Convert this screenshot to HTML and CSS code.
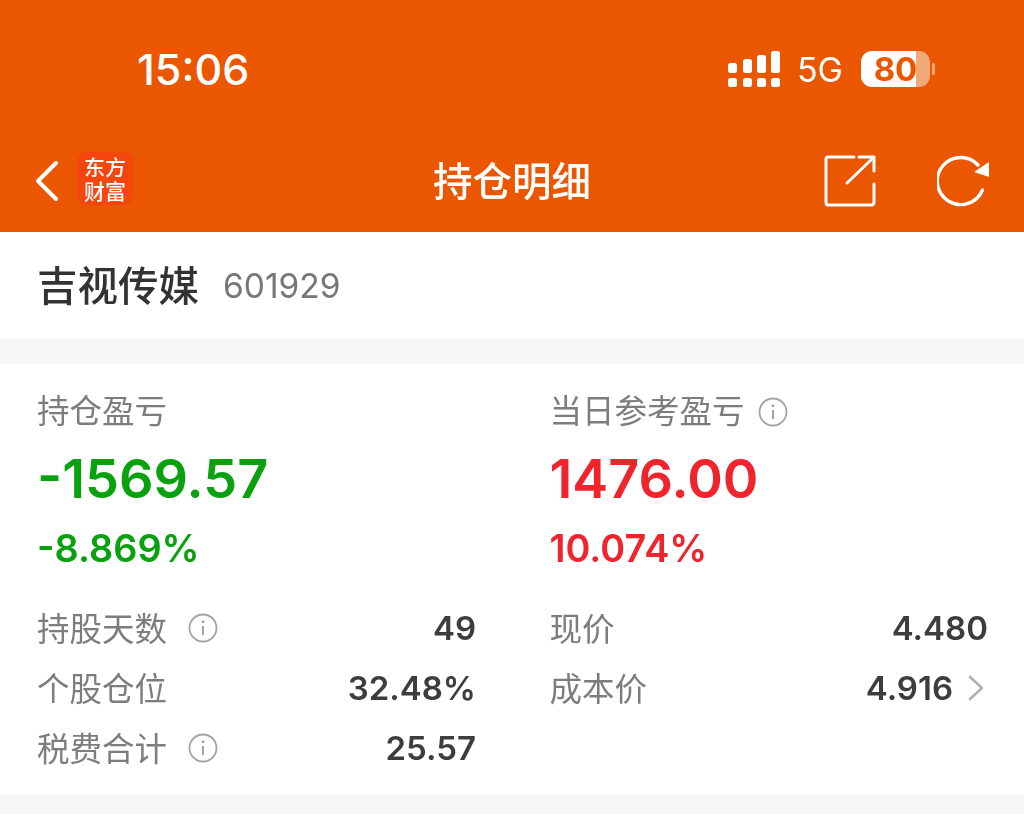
FILE: index.html
```html
<!DOCTYPE html>
<html lang="zh-CN">
<head>
  <meta charset="UTF-8" />
  <meta name="viewport" content="width=device-width, initial-scale=1" />
  <title>持仓明细</title>
  <link rel="stylesheet" href="styles.css">
</head>
<body>

  <header class="top-bar">
    <div class="status-bar">
      <span class="clock">15:06</span>
      <div class="status-icons">
        <svg class="signal" width="52" height="36" viewBox="0 0 52 36" fill="#fff">
          <rect x="0" y="12" width="9" height="10" rx="2.5"/>
          <rect x="15" y="8" width="9" height="14" rx="2.5"/>
          <rect x="29" y="4" width="9" height="18" rx="2.5"/>
          <rect x="43" y="0" width="9" height="22" rx="2.5"/>
          <rect x="0" y="27" width="9" height="9" rx="2.5"/>
          <rect x="15" y="27" width="9" height="9" rx="2.5"/>
          <rect x="29" y="27" width="9" height="9" rx="2.5"/>
          <rect x="43" y="27" width="9" height="9" rx="2.5"/>
        </svg>
        <span class="net">5G</span>
        <div class="battery">
          <div class="battery-body"><span>80</span></div>
          <div class="battery-tip"></div>
        </div>
      </div>
    </div>
    <nav class="nav-bar">
      <div class="nav-left">
        <svg width="26" height="42" viewBox="0 0 26 42" fill="none" stroke="#fff" stroke-width="4" stroke-linecap="round" stroke-linejoin="round">
          <path d="M21 3 L3 21 L21 39"/>
        </svg>
        <div class="app-logo">东方财富</div>
      </div>
      <h1>持仓明细</h1>
      <div class="nav-right">
        <svg width="52" height="52" viewBox="0 0 52 52" fill="none" stroke="#fff" stroke-width="3" stroke-linecap="round" stroke-linejoin="round">
          <path d="M30 2 H4 Q2 2 2 4 V47 Q2 50 4 50 H47 Q50 50 50 47 V29"/>
          <path d="M23 28 L49 3"/>
          <path d="M35 2 H50 V16"/>
        </svg>
        <svg width="52" height="52" viewBox="0 0 52 52" fill="none">
          <path d="M45.5 35 A23.5 23.5 0 1 1 41 10" stroke="#fff" stroke-width="3.4" stroke-linecap="round"/>
          <path d="M52 7 V22 L37 17 Z" fill="#fff"/>
        </svg>
      </div>
    </nav>
  </header>

  <section class="stock-row">
    <span class="stock-name">吉视传媒</span>
    <span class="stock-code">601929</span>
  </section>

  <main class="panel">
    <div class="summary">
      <div class="summary-col">
        <div class="summary-label">持仓盈亏</div>
        <div class="summary-value down">-1569.57</div>
        <div class="summary-pct down">-8.869%</div>
      </div>
      <div class="summary-col">
        <div class="summary-label">当日参考盈亏
          <svg class="info info-top" viewBox="0 0 30 30" fill="none">
            <circle cx="15" cy="15" r="13.5" stroke="#a3a3a3" stroke-width="1.8"/>
            <circle cx="15" cy="8.8" r="1.4" fill="#9a9a9a"/>
            <path d="M15 13 V22" stroke="#9a9a9a" stroke-width="1.8"/>
          </svg>
        </div>
        <div class="summary-value up">1476.00</div>
        <div class="summary-pct up">10.074%</div>
      </div>
    </div>

    <div class="details">
      <div class="detail-row">
        <span class="detail-label">持股天数
          <svg class="info" viewBox="0 0 30 30" fill="none">
            <circle cx="15" cy="15" r="13.5" stroke="#a3a3a3" stroke-width="1.8"/>
            <circle cx="15" cy="8.8" r="1.4" fill="#9a9a9a"/>
            <path d="M15 13 V22" stroke="#9a9a9a" stroke-width="1.8"/>
          </svg>
        </span>
        <span class="detail-value">49</span>
      </div>
      <div class="detail-row">
        <span class="detail-label">现价</span>
        <span class="detail-value">4.480</span>
      </div>
      <div class="detail-row">
        <span class="detail-label">个股仓位</span>
        <span class="detail-value">32.48%</span>
      </div>
      <div class="detail-row">
        <span class="detail-label">成本价</span>
        <span class="detail-value">4.916
          <svg class="chevron" width="16" height="26" viewBox="0 0 16 26" fill="none" stroke="#b0b0b0" stroke-width="2.6" stroke-linecap="round" stroke-linejoin="round">
            <path d="M2 2 L14 13 L2 24"/>
          </svg>
        </span>
      </div>
      <div class="detail-row">
        <span class="detail-label">税费合计
          <svg class="info" viewBox="0 0 30 30" fill="none">
            <circle cx="15" cy="15" r="13.5" stroke="#a3a3a3" stroke-width="1.8"/>
            <circle cx="15" cy="8.8" r="1.4" fill="#9a9a9a"/>
            <path d="M15 13 V22" stroke="#9a9a9a" stroke-width="1.8"/>
          </svg>
        </span>
        <span class="detail-value">25.57</span>
      </div>
    </div>
  </main>

  <div class="gap-strip"></div>

</body>
</html>
```

FILE: styles.css
```css
html, body {
  height: 817px;
  overflow: hidden;
}

body {
  margin: 0;
  font-family: Inter, "Noto Sans CJK SC", sans-serif;
  background-color: #ffffff;
  color: #333;
  filter: blur(0.5px);
}

.top-bar {
  background-color: #eb5600;
  height: 232px;
  color: #fff;
}

.status-bar {
  height: 130px;
  padding: 8px 89px 0 137px;
  display: flex;
  justify-content: space-between;
  align-items: center;
  box-sizing: border-box;
}

.clock {
  font-size: 43px;
  font-weight: 500;
}

.status-icons {
  display: flex;
  align-items: center;
}

.net {
  font-size: 34px;
  margin: 0 18px 0 17px;
}

.battery {
  display: flex;
  align-items: center;
  gap: 2px;
}

.battery-body {
  width: 69px;
  height: 36px;
  border-radius: 11px;
  background: linear-gradient(to right, #fff 80%, #f3a878 80%);
  color: #eb5600;
  font-size: 33px;
  font-weight: 700;
  line-height: 36px;
  text-align: center;
}

.battery-tip {
  width: 3px;
  height: 12px;
  background-color: #f3a878;
  border-radius: 0 2px 2px 0;
}

.nav-bar {
  height: 102px;
  padding: 0 35px 0 35px;
  display: flex;
  justify-content: space-between;
  align-items: center;
  position: relative;
}

.nav-left {
  display: flex;
  align-items: center;
  gap: 16px;
}

.app-logo {
  width: 56px;
  height: 53px;
  margin-top: -5px;
  padding: 2px 6px;
  box-sizing: border-box;
  background-color: #f5460e;
  border-radius: 9px;
  text-align: center;
  font-family: "Noto Sans CJK SC", sans-serif;
  font-size: 21px;
  font-weight: 500;
  line-height: 24px;
}

.nav-bar h1 {
  position: absolute;
  left: 0;
  right: 0;
  margin: 0;
  padding-bottom: 6px;
  text-align: center;
  font-size: 39.5px;
  font-weight: 500;
  font-family: "Noto Sans CJK SC", sans-serif;
  pointer-events: none;
}

.nav-right {
  display: flex;
  align-items: center;
  gap: 61px;
}

.stock-row {
  height: 107px;
  padding: 0 37px 0 37px;
  display: flex;
  align-items: center;
  gap: 24px;
  box-sizing: border-box;
}

.stock-name {
  font-size: 40.5px;
  font-weight: 500;
  color: #333;
  font-family: "Noto Sans CJK SC", sans-serif;
  padding-bottom: 4px;
}

.stock-code {
  font-size: 33.5px;
  color: #777;
}

.panel {
  border-top: 25px solid #f5f6f8;
  padding: 21px 36px 0 37px;
  height: 456px;
  box-sizing: border-box;
}

.summary {
  display: grid;
  grid-template-columns: 439px 438.5px;
  column-gap: 73.5px;
}

.summary-label {
  font-size: 32.5px;
  line-height: 48px;
  color: #7d7d7d;
  display: flex;
  align-items: center;
  gap: 13px;
  font-family: "Noto Sans CJK SC", sans-serif;
}

.summary-value {
  font-size: 54px;
  font-weight: 600;
  line-height: 66px;
  margin-top: 13px;
}

.summary-pct {
  font-size: 37.8px;
  font-weight: 600;
  line-height: 44px;
  margin-top: 14px;
}

.down { color: #0aa10f; }
.up { color: #f0242c; }

.details {
  display: grid;
  grid-template-columns: 439px 438.5px;
  column-gap: 73.5px;
  margin-top: 28px;
}

.detail-row {
  height: 60px;
  display: flex;
  justify-content: space-between;
  align-items: center;
}

.detail-label {
  display: flex;
  align-items: center;
  gap: 21px;
  padding-bottom: 4px;
  font-size: 32.5px;
  color: #7d7d7d;
  font-family: "Noto Sans CJK SC", sans-serif;
}

.detail-value {
  display: flex;
  align-items: center;
  gap: 15px;
  font-size: 33px;
  font-weight: 600;
  color: #3d3d3d;
}

.info {
  width: 30px;
  height: 30px;
  margin-top: 4px;
}

.info-top {
  margin-top: 6px;
}

.chevron {
  margin-right: 4px;
}

.gap-strip {
  height: 19px;
  background-color: #f5f6f8;
}
```
